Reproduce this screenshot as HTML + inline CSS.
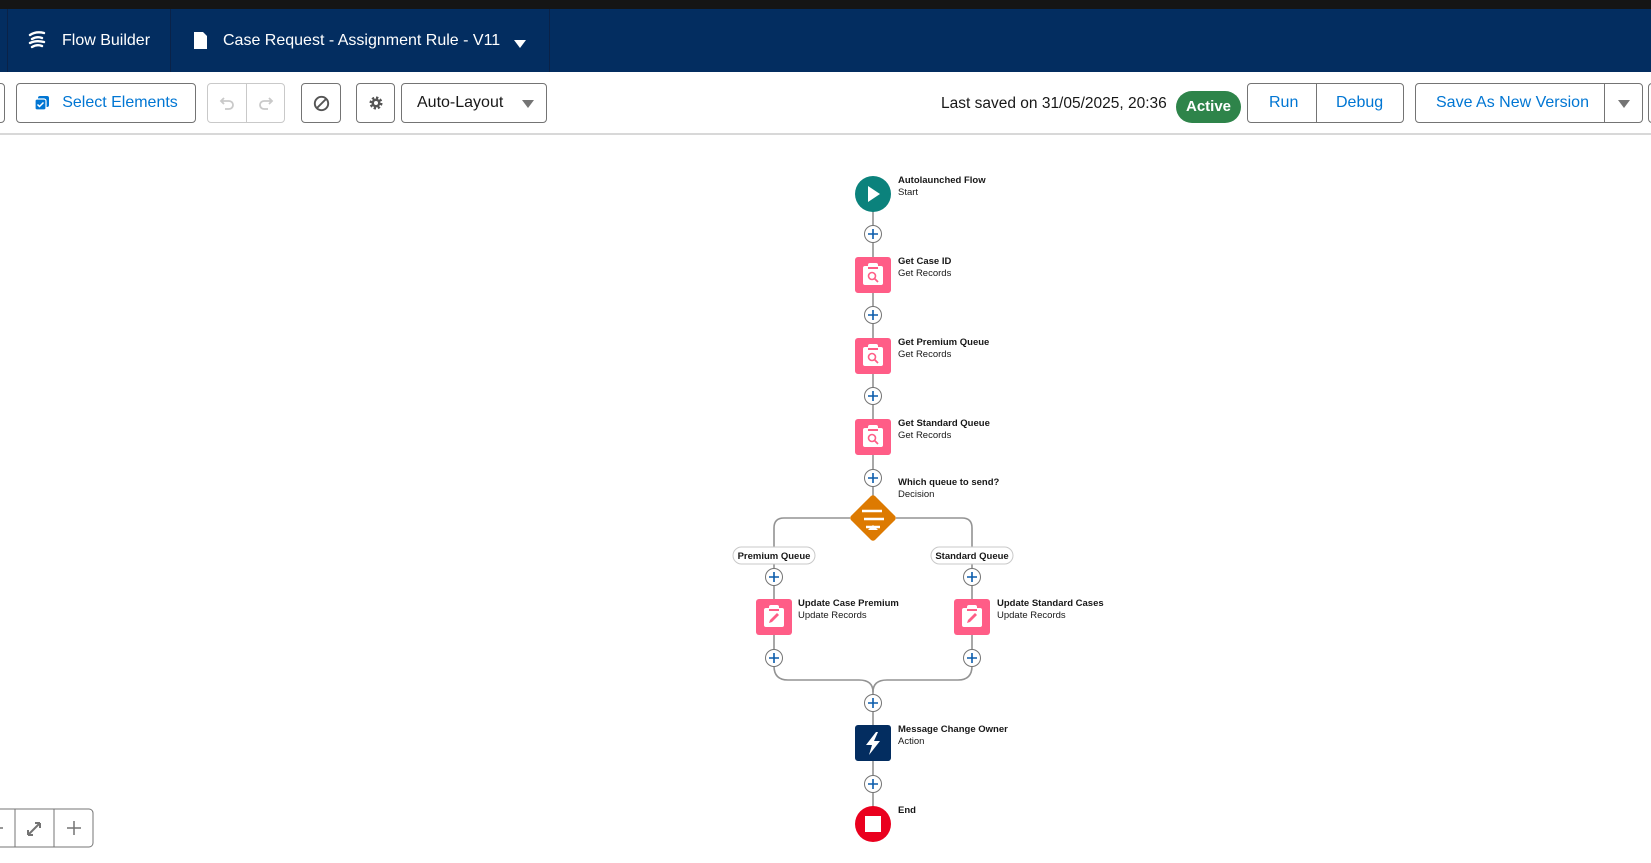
<!DOCTYPE html>
<html><head><meta charset="utf-8"><style>
*{box-sizing:border-box;margin:0;padding:0}
body{width:1651px;height:863px;overflow:hidden;background:#fff;font-family:"Liberation Sans",sans-serif;position:relative}
.top{position:absolute;left:0;top:0;width:1651px;height:9px;background:#151515}
.nav{position:absolute;left:0;top:9px;width:1651px;height:63px;background:#032d60;color:#fff}
.sep{position:absolute;top:0;width:1px;height:63px;background:#0a2248}
.nav .t{position:absolute;top:23px;font-size:16px;white-space:nowrap}
.tb{position:absolute;left:0;top:72px;width:1651px;height:63px;border-bottom:2px solid #d8d8d8;background:#fff}
.btn{position:absolute;top:11px;height:40px;border:1px solid #747474;border-radius:4px;background:#fff;font-size:16px;color:#0176d3;display:flex;align-items:center;justify-content:center;white-space:nowrap}
.canvas{position:absolute;left:0;top:0}
</style></head><body>
<div class="top"></div>
<div class="nav">
 <div class="sep" style="left:7px"></div><div class="sep" style="left:170px"></div><div class="sep" style="left:549px"></div>
 <svg style="position:absolute;left:27px;top:21px" width="20" height="22" viewBox="0 0 20 22"><path d="M3 5 Q9 1 17 3 M5 9 Q10 6 15 8 M3 13 Q9 10 17 12 M5 17 Q10 14 15 16" stroke="#fff" stroke-width="2.4" fill="none" stroke-linecap="round"/></svg>
 <div class="t" style="left:62px">Flow Builder</div>
 <svg style="position:absolute;left:193px;top:22px" width="15" height="19" viewBox="0 0 15 19"><path d="M1 1 H10 L14 5 V18 H1 Z" fill="#fff"/></svg>
 <div class="t" style="left:223px">Case Request - Assignment Rule - V11</div>
 <svg style="position:absolute;left:514px;top:31px" width="12" height="8"><path d="M0 0H12L6 8Z" fill="#fff"/></svg>
</div>
<div class="tb">
 <div class="btn" style="left:-10px;width:15px"></div>
 <div class="btn" style="left:16px;width:180px"><svg width="16" height="16" style="margin-right:12px" viewBox="0 0 16 16"><rect x="4" y="1" width="11" height="11" rx="2" fill="#0176d3"/><rect x="1" y="4" width="11" height="11" rx="2" fill="#0176d3" stroke="#fff" stroke-width="1.2"/><path d="M3.5 9.5l2 2 4-4" stroke="#fff" stroke-width="1.5" fill="none"/></svg>Select Elements</div>
 <div class="btn" style="left:207px;width:78px;border-color:#c9c9c9"><div style="position:absolute;left:38px;top:0;width:1px;height:38px;background:#c9c9c9"></div>
  <svg style="position:absolute;left:11px;top:11px" width="16" height="16" viewBox="0 0 16 16"><path d="M5 3 L2 6 L5 9 M2 6 H10 A4 4 0 0 1 10 14 H6" stroke="#c9c9c9" stroke-width="1.8" fill="none"/></svg>
  <svg style="position:absolute;left:50px;top:11px" width="16" height="16" viewBox="0 0 16 16"><path d="M11 3 L14 6 L11 9 M14 6 H6 A4 4 0 0 0 6 14 H10" stroke="#c9c9c9" stroke-width="1.8" fill="none"/></svg></div>
 <div class="btn" style="left:301px;width:40px"><svg width="17" height="17" viewBox="0 0 16 16"><circle cx="8" cy="8" r="6.3" stroke="#555" stroke-width="1.8" fill="none"/><path d="M4 12 L12 4" stroke="#555" stroke-width="1.8"/></svg></div>
 <div class="btn" style="left:356px;width:39px"><svg width="16" height="16" viewBox="0 0 16 16"><circle cx="8" cy="8" r="5" fill="none" stroke="#555" stroke-width="3" stroke-dasharray="2.2 1.7"/><circle cx="8" cy="8" r="4.5" fill="#555"/><circle cx="8" cy="8" r="2" fill="#fff"/></svg></div>
 <div class="btn" style="left:401px;width:146px;color:#181818;justify-content:flex-start;padding-left:15px">Auto-Layout<svg style="position:absolute;right:12px;top:16px" width="12" height="8"><path d="M0 0H12L6 8Z" fill="#747474"/></svg></div>
 <div style="position:absolute;left:941px;top:23px;font-size:15.5px;color:#181818;white-space:nowrap">Last saved on 31/05/2025, 20:36</div>
 <div style="position:absolute;left:1176px;top:19px;width:65px;height:32px;border-radius:16px;background:#2e844a;color:#fff;font-weight:bold;font-size:15px;text-align:center;line-height:32px">Active</div>
 <div class="btn" style="left:1247px;width:157px;top:11px;height:40px"><span style="position:absolute;left:21px;top:10px">Run</span><div style="position:absolute;left:68px;top:0;width:1px;height:38px;background:#747474"></div><span style="position:absolute;left:88px;top:10px">Debug</span></div>
 <div class="btn" style="left:1415px;width:228px;top:11px;height:40px"><span style="position:absolute;left:20px;top:10px">Save As New Version</span><div style="position:absolute;left:188px;top:0;width:1px;height:38px;background:#747474"></div><svg style="position:absolute;left:202px;top:16px" width="12" height="8"><path d="M0 0H12L6 8Z" fill="#747474"/></svg></div>
 <div class="btn" style="left:1648px;width:20px;top:11px;height:40px"></div>
</div>
<svg class="canvas" width="1651" height="863" style="font-family:'Liberation Sans',sans-serif">
<defs>
 <g id="plus"><circle r="8.5" fill="#fff" stroke="#747474" stroke-width="1"/><path d="M-5 0H5M0 -5V5" stroke="#0b5cab" stroke-width="1.6"/></g>
 <g id="get"><rect x="-18" y="-18" width="36" height="36" rx="3" fill="#ff5d87"/><rect x="-10" y="-9" width="20" height="19" rx="2" fill="#fff"/><rect x="-5" y="-12" width="10" height="5" rx="2" fill="#fff"/><rect x="-5" y="-8" width="10" height="2" fill="#ff5d87"/><circle cx="-1" cy="1" r="3.5" fill="none" stroke="#ff5d87" stroke-width="1.6"/><path d="M1.5 3.5L5 7" stroke="#ff5d87" stroke-width="1.8"/></g>
 <g id="upd"><rect x="-18" y="-18" width="36" height="36" rx="3" fill="#ff5d87"/><rect x="-10" y="-9" width="20" height="19" rx="2" fill="#fff"/><rect x="-5" y="-12" width="10" height="5" rx="2" fill="#fff"/><rect x="-5" y="-8" width="10" height="2" fill="#ff5d87"/><path d="M-5 6 L-4 3 L3 -4 L5 -2 L-2 5 Z" fill="#ff5d87"/></g>
</defs>
<g stroke="#939393" stroke-width="1.6" fill="none">
 <path d="M873 194V500"/>
 <path d="M850 518H784Q774 518 774 528V666Q774 680 788 680H859Q873 680 873 692"/>
 <path d="M896 518H962Q972 518 972 528V666Q972 680 958 680H887Q873 680 873 692"/>
 <path d="M873 692V824"/>
</g>
<circle cx="873" cy="194" r="18" fill="#0b827c"/><path d="M868 186L880 194L868 202Z" fill="#fff"/>
<use href="#plus" x="873" y="234"/><use href="#get" x="873" y="275"/>
<use href="#plus" x="873" y="315"/><use href="#get" x="873" y="356"/>
<use href="#plus" x="873" y="396"/><use href="#get" x="873" y="437"/>
<use href="#plus" x="873" y="478"/>
<g transform="translate(873 518) rotate(45)"><rect x="-17" y="-17" width="34" height="34" rx="3" fill="#dd7a01"/></g>
<path d="M862 511H882M864 519H884M866 527H880" stroke="#fff" stroke-width="2.5"/><path d="M873 525L868 530H878Z" fill="#fff"/>
<rect x="733" y="547" width="82" height="17" rx="8.5" fill="#fff" stroke="#c9c9c9"/>
<text x="774" y="559" font-size="9.5" font-weight="bold" text-anchor="middle" fill="#181818">Premium Queue</text>
<rect x="931" y="547" width="82" height="17" rx="8.5" fill="#fff" stroke="#c9c9c9"/>
<text x="972" y="559" font-size="9.5" font-weight="bold" text-anchor="middle" fill="#181818">Standard Queue</text>
<use href="#plus" x="774" y="577"/><use href="#plus" x="972" y="577"/>
<use href="#upd" x="774" y="617"/><use href="#upd" x="972" y="617"/>
<use href="#plus" x="774" y="658"/><use href="#plus" x="972" y="658"/>
<use href="#plus" x="873" y="703"/>
<rect x="855" y="725" width="36" height="36" rx="3" fill="#032d60"/><path d="M876 732L866 745H872L869 755L880 741H874L878 732Z" fill="#fff"/>
<use href="#plus" x="873" y="784"/>
<circle cx="873" cy="824" r="18" fill="#ea001e"/><rect x="865" y="816" width="16" height="16" fill="#fff"/>
<g font-size="9.5" fill="#181818">
 <text x="898" y="183" font-weight="bold">Autolaunched Flow</text><text x="898" y="195">Start</text>
 <text x="898" y="264" font-weight="bold">Get Case ID</text><text x="898" y="276">Get Records</text>
 <text x="898" y="345" font-weight="bold">Get Premium Queue</text><text x="898" y="357">Get Records</text>
 <text x="898" y="426" font-weight="bold">Get Standard Queue</text><text x="898" y="438">Get Records</text>
 <text x="898" y="485" font-weight="bold">Which queue to send?</text><text x="898" y="497">Decision</text>
 <text x="798" y="606" font-weight="bold">Update Case Premium</text><text x="798" y="618">Update Records</text>
 <text x="997" y="606" font-weight="bold">Update Standard Cases</text><text x="997" y="618">Update Records</text>
 <text x="898" y="732" font-weight="bold">Message Change Owner</text><text x="898" y="744">Action</text>
 <text x="898" y="813" font-weight="bold">End</text>
</g>
<rect x="-10" y="809" width="103" height="38" rx="4" fill="#fff" stroke="#747474"/>
<path d="M15 809V847M54 809V847" stroke="#747474"/>
<path d="M0 828H3" stroke="#747474" stroke-width="1.5"/>
<path d="M28 835L40 823M28 835V830M28 835H33M40 823H35M40 823V828" stroke="#747474" stroke-width="2" fill="none"/>
<path d="M67 828H81M74 821V835" stroke="#747474" stroke-width="1.5"/>
</svg>
</body></html>
